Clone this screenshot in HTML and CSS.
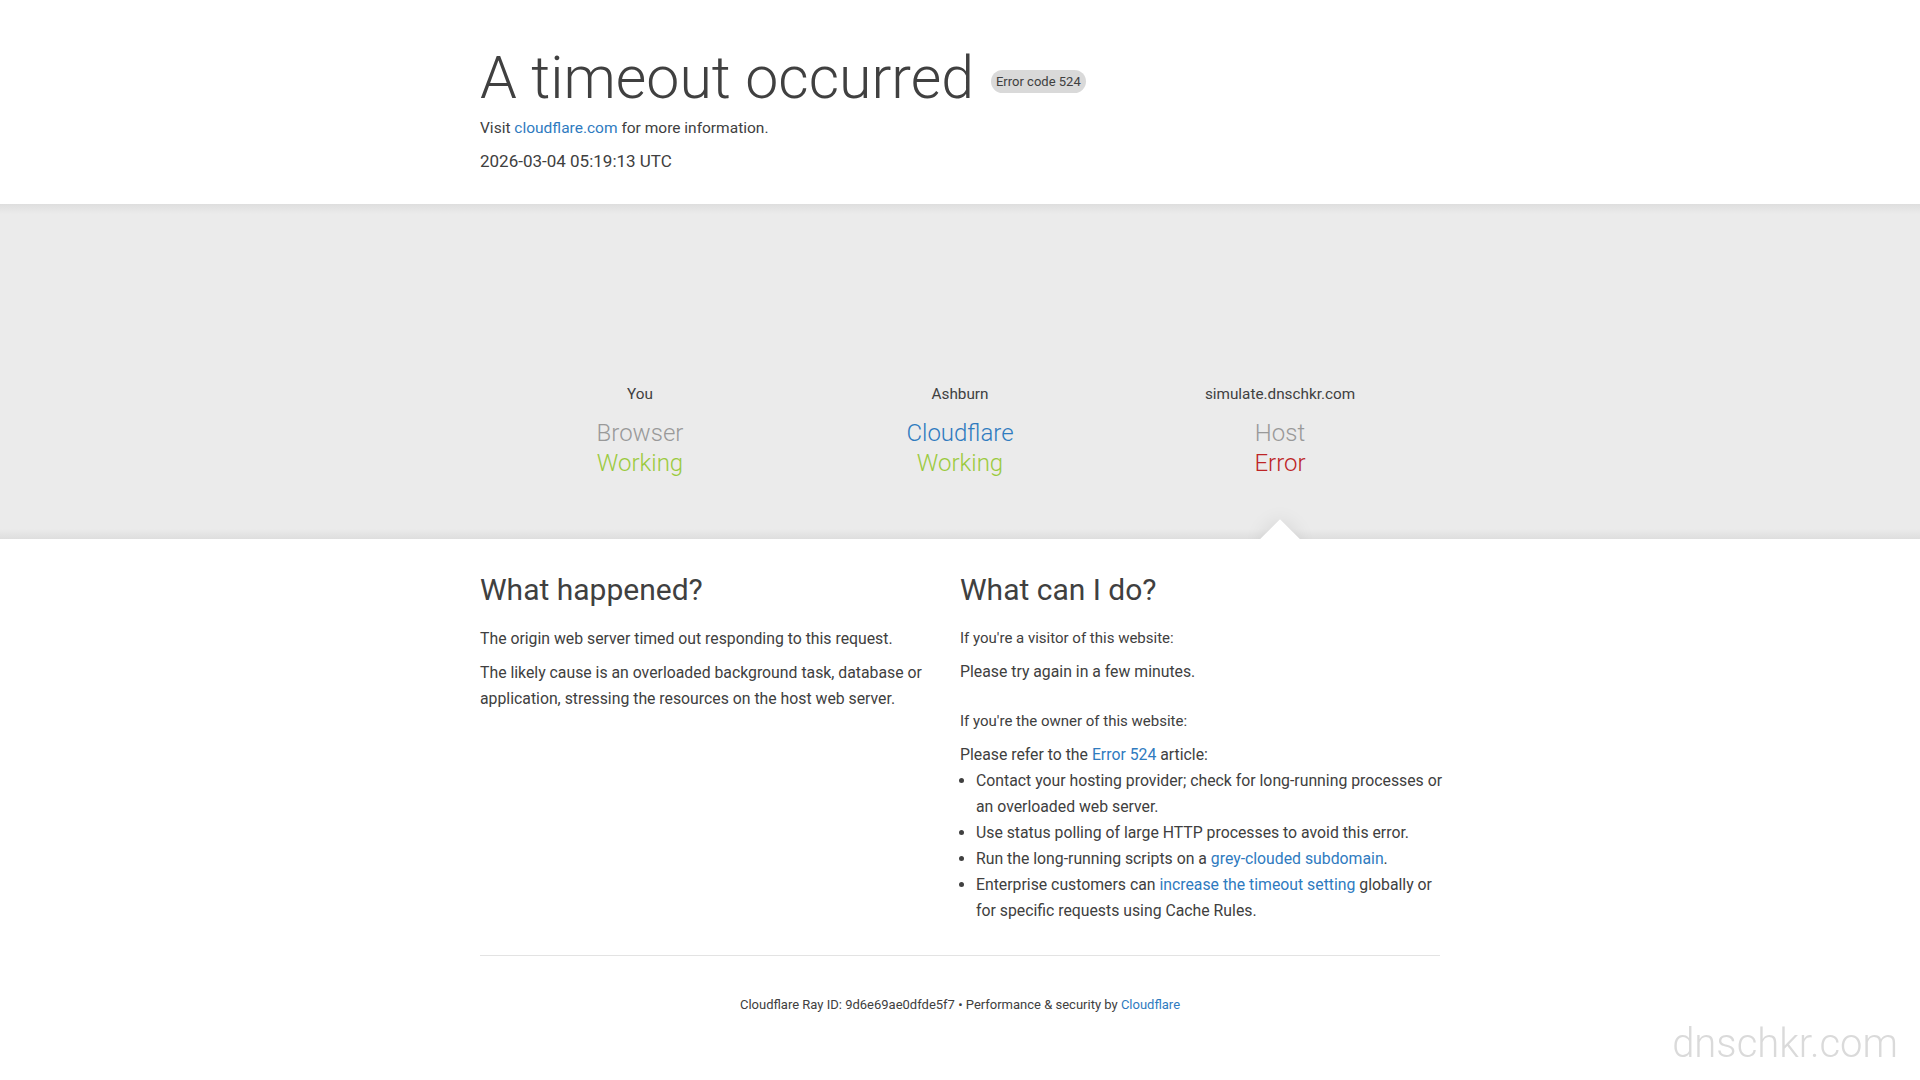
FILE: index.html
```html
<!DOCTYPE html>
<html lang="en">
<head>
<meta charset="utf-8">
<title>simulate.dnschkr.com | 524: A timeout occurred</title>
<link rel="stylesheet" href="styles.css">
</head>
<body>
<div class="page">
  <header class="overview wrapper">
    <h1 class="title"><span class="title-text">A timeout occurred</span><span class="badge">Error code 524</span></h1>
    <p class="visit">Visit <a href="#">cloudflare.com</a> for more information.</p>
    <p class="stamp">2026-03-04 05:19:13 UTC</p>
  </header>

  <section class="highlight">
    <div class="wrapper status-row">
      <div class="status">
        <div class="icon-slot"></div>
        <div class="location">You</div>
        <div class="name">Browser</div>
        <div class="state ok">Working</div>
      </div>
      <div class="status">
        <div class="icon-slot"></div>
        <div class="location">Ashburn</div>
        <div class="name name-cf">Cloudflare</div>
        <div class="state ok">Working</div>
      </div>
      <div class="status status-source">
        <div class="icon-slot"></div>
        <div class="location">simulate.dnschkr.com</div>
        <div class="name">Host</div>
        <div class="state err">Error</div>
      </div>
    </div>
  </section>

  <section class="details wrapper">
    <div class="col col-left">
      <h2>What happened?</h2>
      <p>The origin web server timed out responding to this request.</p>
      <p>The likely cause is an overloaded background task, database or application, stressing the resources on the host web server.</p>
    </div>
    <div class="col col-right">
      <h2>What can I do?</h2>
      <h5>If you're a visitor of this website:</h5>
      <p>Please try again in a few minutes.</p>
      <h5 class="owner">If you're the owner of this website:</h5>
      <p class="refer">Please refer to the <a href="#">Error 524</a> article:</p>
      <ul>
        <li>Contact your hosting provider; check for long-running processes or an overloaded web server.</li>
        <li>Use status polling of large HTTP processes to avoid this error.</li>
        <li>Run the long-running scripts on a <a href="#">grey-clouded subdomain</a>.</li>
        <li>Enterprise customers can <a href="#">increase the timeout setting</a> globally or for specific requests using Cache Rules.</li>
      </ul>
    </div>
  </section>

  <footer class="footer wrapper">
    <p>Cloudflare Ray ID: 9d6e69ae0dfde5f7 &bull; Performance &amp; security by <a href="#">Cloudflare</a></p>
  </footer>
</div>
<div class="watermark">dnschkr.com</div>
</body>
</html>
```
FILE: styles.css
```css
html, body {
  margin: 0;
  padding: 0;
  background: #fff;
}

body {
  font-family: Roboto, "Liberation Sans", Arial, sans-serif;
  color: #404040;
  font-size: 15.8px;
  line-height: 26px;
}

a {
  color: #2f7bbf;
  text-decoration: none;
}

.wrapper {
  max-width: 960px;
  margin-left: auto;
  margin-right: auto;
}

/* ---------- overview ---------- */
.overview {
  padding: 42px 0 31px;
}

.title {
  display: flex;
  align-items: center;
  gap: 17px;
  margin: 0;
  font-size: 59px;
  font-weight: 300;
  line-height: 72px;
}

.badge {
  display: inline-block;
  background: #d9d9d9;
  border-radius: 12px;
  padding: 0 5px;
  height: 23px;
  line-height: 23px;
  font-size: 13px;
  font-weight: 400;
  margin-top: 7px;
}

.visit,
.stamp {
  margin: 0;
  font-size: 15.5px;
  line-height: 24px;
}

.visit {
  margin: 2px 0 9px;
}

.stamp {
  font-size: 17px;
}

/* ---------- highlight band ---------- */
.highlight {
  background: #ebebeb;
  background-image: linear-gradient(to bottom, #dedede, #ebebeb 3%, #ebebeb 97%, #dedede);
  overflow: hidden;
}

.status-row {
  display: grid;
  grid-template-columns: repeat(3, 1fr);
}

.status {
  position: relative;
  text-align: center;
  padding: 31px 0 61px;
}

.icon-slot {
  height: 147px;
}

.location {
  font-size: 15.3px;
  line-height: 24px;
  margin-bottom: 12px;
}

.name {
  font-size: 24px;
  font-weight: 300;
  line-height: 30px;
  color: #999;
}

.name-cf {
  color: #2f7bbf;
}

.state {
  font-size: 24px;
  font-weight: 300;
  line-height: 30px;
}

.state.ok { color: #9bca3e; }
.state.err { color: #bd2426; }

.status-source::after {
  content: "";
  position: absolute;
  left: 50%;
  bottom: -14px;
  width: 28px;
  height: 28px;
  margin-left: -14px;
  background: #fff;
  transform: rotate(45deg);
  box-shadow: 0 0 20px rgba(0, 0, 0, 0.1);
}

/* ---------- details ---------- */
.details {
  display: grid;
  grid-template-columns: 1fr 1fr;
  padding: 33px 0 31px;
}

.col-left {
  padding-right: 22px;
}

h2 {
  margin: 0 0 18px;
  font-size: 30px;
  font-weight: 400;
  line-height: 36px;
}

p {
  margin: 0 0 8px;
}

h5 {
  margin: 0 0 8px;
  font-size: 15px;
  font-weight: 400;
  line-height: 26px;
}

.col-right h2 {
  margin-bottom: 17px;
}

.col-right p {
  margin-bottom: 7px;
}

h5.owner {
  margin-top: 23px;
}

.col-right p.refer {
  margin-bottom: 0;
}

ul {
  margin: 0 -14px 0 0;
  padding-left: 16px;
}

li {
  margin: 0;
}

/* ---------- footer ---------- */
.footer {
  border-top: 1px solid #e3e3e3;
  padding: 39px 0 40px;
  text-align: center;
}

.footer p {
  margin: 0;
  font-size: 13px;
  line-height: 20px;
}

/* ---------- watermark ---------- */
.watermark {
  position: fixed;
  right: 22px;
  bottom: 16px;
  font-family: Roboto, "Liberation Sans", sans-serif;
  font-size: 40px;
  font-weight: 300;
  line-height: 40px;
  color: #dadada;
  pointer-events: none;
}
```
